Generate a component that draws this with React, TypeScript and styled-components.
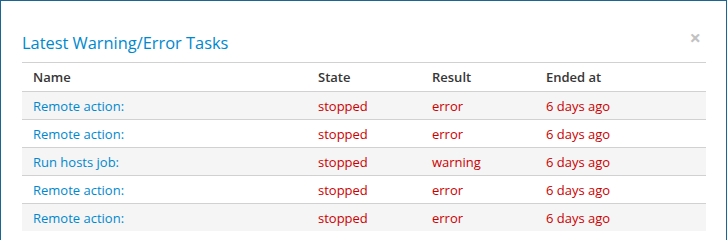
import React from "react";
import styled, { createGlobalStyle } from "styled-components";

const GlobalStyle = createGlobalStyle`
  html, body {
    margin: 0;
    padding: 0;
    background: #ffffff;
  }
  body {
    font-family: "Open Sans", "Liberation Sans", sans-serif;
    font-size: 13px;
    color: #363636;
  }
`;

const Modal = styled.div`
  box-sizing: border-box;
  width: 727px;
  height: 240px;
  border: 1px solid #1a6591;
  border-bottom: none;
  background: #ffffff;
  padding: 0 20px 0 21px;
`;

const Header = styled.div`
  display: flex;
  align-items: flex-start;
  justify-content: space-between;
  padding-top: 30px;
  height: 61px;
  box-sizing: border-box;
`;

const Title = styled.h4`
  margin: 0;
  font-size: 16.4px;
  font-weight: 400;
  line-height: 24px;
  color: #0088ce;
`;

const Close = styled.span`
  color: #c2c2c2;
  font-size: 20px;
  line-height: 12px;
  font-weight: 700;
  margin-right: 5px;
  padding-top: 1px;
`;

const Table = styled.table`
  width: 684px;
  border-collapse: collapse;
  table-layout: fixed;
`;

const Th = styled.th<{ w?: number }>`
  width: ${(p) => (p.w ? `${p.w - 22}px` : "auto")};
  text-align: left;
  font-weight: 600;
  color: #363636;
  padding: 0 11px;
  height: 28px;
  border-top: 1px solid #d1d1d1;
  border-bottom: 1px solid #d1d1d1;
`;

const Row = styled.tr<{ striped: boolean }>`
  background: ${(p) => (p.striped ? "#f5f5f5" : "#ffffff")};
  border-bottom: 1px solid #d1d1d1;
  &:last-child {
    border-bottom: none;
  }
`;

const Td = styled.td<{ tone: "link" | "danger" }>`
  padding: 0 11px;
  height: 27px;
  color: ${(p) => (p.tone === "link" ? "#0088ce" : "#cc0000")};
  white-space: nowrap;
`;

const tasks = [
  { name: "Remote action:", state: "stopped", result: "error", ended: "6 days ago" },
  { name: "Remote action:", state: "stopped", result: "error", ended: "6 days ago" },
  { name: "Run hosts job:", state: "stopped", result: "warning", ended: "6 days ago" },
  { name: "Remote action:", state: "stopped", result: "error", ended: "6 days ago" },
  { name: "Remote action:", state: "stopped", result: "error", ended: "6 days ago" },
];

export default function App() {
  return (
    <>
      <GlobalStyle />
      <Modal>
        <Header>
          <Title>Latest Warning/Error Tasks</Title>
          <Close>×</Close>
        </Header>
        <Table>
          <thead>
            <tr>
              <Th w={285}>Name</Th>
              <Th w={114}>State</Th>
              <Th w={114}>Result</Th>
              <Th>Ended at</Th>
            </tr>
          </thead>
          <tbody>
            {tasks.map((t, i) => (
              <Row key={i} striped={i % 2 === 0}>
                <Td tone="link">{t.name}</Td>
                <Td tone="danger">{t.state}</Td>
                <Td tone="danger">{t.result}</Td>
                <Td tone="danger">{t.ended}</Td>
              </Row>
            ))}
          </tbody>
        </Table>
      </Modal>
    </>
  );
}
